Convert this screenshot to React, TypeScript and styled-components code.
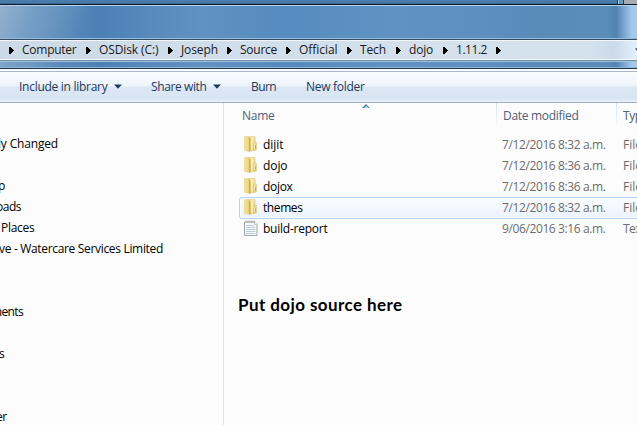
import React, { useLayoutEffect, useRef, useState } from "react";
import styled, { createGlobalStyle } from "styled-components";

const Global = createGlobalStyle`
  html, body { margin: 0; padding: 0; overflow: hidden; }
  * { box-sizing: border-box; }
`;

const Window = styled.div`
  width: 637px;
  height: 425px;
  overflow: hidden;
  display: flex;
  flex-direction: column;
  background: #fcfcfc;
  font-family: "Open Sans", "Noto Sans", sans-serif;
  font-size: 12px;
  line-height: 21px;
  color: #000;
`;

const Glass = styled.header`
  flex: none;
  height: 69px;
  display: flex;
  flex-direction: column;
  background:
    linear-gradient(90deg, transparent 606px, rgba(54, 105, 156, 0.3) 616px, rgba(145, 185, 228, 0.55) 624px, #a5c8ed 632px),
    linear-gradient(115deg, rgba(166, 188, 210, 0.75) 0, rgba(140, 174, 207, 0.5) 35px, transparent 85px),
    linear-gradient(90deg, #6794bf 0, #5688b9 70px, #4c80b5 100px, #588abd 150px, #6092c2 205px, #568bbf 285px, #6093c4 390px, #5d90c0 480px, #598bb9 540px, #5d8fbb 637px);
`;

const TopStrip = styled.div`
  flex: none;
  height: 6px;
  display: flex;
  justify-content: flex-end;
  background: linear-gradient(#487dae, #4679a6 3px, #335b7f 4px);
  border-bottom: 1px solid #b5d2e7;
  box-shadow: inset 0 -1px #101c2c;
`;

const StripEdge = styled.div`
  width: 20px;
  height: 4px;
  background: linear-gradient(90deg, #243d54 0 1px, #a9cfe8 1px 2px, #6697bb 2px 6px, #2c3f50 6px 7px, #a9a9b4 7px);
`;

const AddressBar = styled.nav`
  flex: none;
  height: 24px;
  margin-top: 32px;
  display: flex;
  align-items: center;
  padding-left: 9px;
  border-top: 1px solid #96bddd;
  border-bottom: 1px solid #a2c1da;
  box-shadow: inset 0 1px #344d64, inset 0 2px #f1f6fa, inset 0 -1px #6e8da8, inset 0 -2px #f3f7fb;
  background: linear-gradient(90deg, #ccdae7 0, #d0deeb 210px, #d4e1ec 400px, #d4e2ee 590px, #cbdae8 614px, #e2edfa 635px);
`;

const Crumb = styled.div<{ $w: number }>`
  flex: none;
  width: ${(p) => p.$w}px;
  height: 21px;
  margin-bottom: 1px;
  display: flex;
  align-items: center;
  gap: 8px;
  color: #1a1a1a;
  svg { flex: none; margin-top: 1px; }
`;

const AddressDrop = styled.div`
  margin-left: auto;
  width: 2px;
  height: 4px;
  overflow: hidden;
  display: flex;
`;

const LowerEdge = styled.div`
  flex: none;
  height: 2px;
  margin-top: 5px;
  background: linear-gradient(#8fb5d8 0 1px, #22384f 1px 2px);
`;

const CommandBar = styled.div`
  flex: none;
  height: 34px;
  padding: 5px 0 0 19px;
  display: flex;
  color: #1e395b;
  border-bottom: 1px solid #a0afc3;
  background: linear-gradient(#f9fcff 0 2px, #a9b6cd 2px 3px, #fbfdff 3px, #ecf4fc 17px, #dce7f5 18px, #dae5f3 30px, #e6eff9 32px, #e6eff9 33px);
`;

const Command = styled.div<{ $w: number }>`
  flex: none;
  width: ${(p) => p.$w}px;
  height: 24px;
  display: flex;
  align-items: center;
  gap: 6px;
  svg { flex: none; margin-top: 1px; }
`;

const Body = styled.div`
  flex: 1;
  display: flex;
  min-height: 0;
`;

const Sidebar = styled.aside`
  flex: none;
  width: 224px;
  padding-top: 30px;
  border-right: 1px solid #d6e5f5;
  overflow: hidden;
`;

const SideItem = styled.div<{ $x: number }>`
  height: 21px;
  display: flex;
  margin-left: ${(p) => p.$x}px;
`;

const Main = styled.main`
  flex: 1;
  min-width: 0;
  overflow: hidden;
`;

const Columns = styled.div`
  height: 31px;
  display: grid;
  grid-template-columns: 273px 120px 120px;
  color: #4c607a;
`;

const Column = styled.div<{ $pad: number }>`
  position: relative;
  height: 24px;
  display: flex;
  align-items: center;
  padding: 1px 0 0 ${(p) => p.$pad}px;
  border-right: 1px solid;
  border-image: linear-gradient(#cfe2f7, #e4eef9, #fcfcfc) 1;
`;

const SortMark = styled.svg`
  position: absolute;
  left: 138px;
  top: 1px;
`;

const FileRow = styled.div<{ $hot?: boolean }>`
  height: ${(p) => (p.$hot ? 22 : 21)}px;
  margin: 0 -4px ${(p) => (p.$hot ? -1 : 0)}px 15px;
  display: grid;
  grid-template-columns: 24px 239px 121px 60px;
  border-radius: 3px;
  box-shadow: ${(p) => (p.$hot ? "inset 0 0 0 1px #b3d3f9, inset 0 0 0 2px #fbfdff" : "none")};
  background: ${(p) => (p.$hot ? "linear-gradient(#fafcff, #ebf3fd)" : "none")};
`;

const IconCell = styled.div`
  padding: 2px 0 0 5px;
  svg { display: block; }
`;

const Meta = styled.div`
  color: #6d6d6d;
`;

const Caption = styled.div`
  margin: 54px 0 0 14px;
  height: 24px;
  font-family: Lato, "Open Sans", sans-serif;
  font-size: 17px;
  font-weight: 700;
  line-height: 24px;
`;

const Label = styled.span`
  display: inline-block;
  white-space: pre;
`;

/* Text tracked so that it occupies the given number of pixels. */
function Fit({ w, children }: { w: number; children: string }) {
  const ref = useRef<HTMLSpanElement>(null);
  const [spacing, setSpacing] = useState(0);
  useLayoutEffect(() => {
    const el = ref.current;
    if (!el) return;
    const natural = el.getBoundingClientRect().width - spacing * children.length;
    setSpacing((w - natural) / children.length);
  }, [w, children]);
  return <Label ref={ref} style={{ letterSpacing: spacing }}>{children}</Label>;
}

const Arrow = () => (
  <svg width="5" height="7" shapeRendering="crispEdges"><path d="M0 0h1l3.5 3.5L1 7H0z" fill="#000" /></svg>
);

const Down = ({ fill = "#1e395b" }: { fill?: string }) => (
  <svg width="8" height="5"><path d="M0 .4h8L4 4.8z" fill={fill} /></svg>
);

const Folder = () => (
  <svg width="13" height="16" viewBox="0 0 13 16">
    <defs>
      <linearGradient id="flap" x1="0" x2="1"><stop stopColor="#f3e5a0" /><stop offset=".6" stopColor="#ecd984" /><stop offset="1" stopColor="#dcc063" /></linearGradient>
      <linearGradient id="back" x1="0" y1="0" x2="0" y2="1"><stop stopColor="#f0e4a6" /><stop offset="1" stopColor="#e2c767" /></linearGradient>
    </defs>
    <path d="M4.5.6 10.3.3q.9 0 .9.9v4.3l1.3.8v7.2q0 .8-.8.8L5 15z" fill="url(#back)" stroke="#dcc77b" strokeWidth=".5" />
    <path d="M7.2 1.2h1.4v12.9H7.2z" fill="#faf3c6" />
    <path d="M.3 1.3q0-.8.8-.8L4.4.7q1.9.5 1.9 2v12.8L1 14.6q-.7-.2-.7-.9z" fill="url(#flap)" stroke="#dcc77b" strokeWidth=".5" />
    <path d="M5 1.6q1.2.4 1.2 1.5v12.3L5 15.2z" fill="#cdb052" />
    <path d="M11.1 9.2h.9v3.4h-.9z" fill="#6fb0d0" />
    <path d="M10.4 8.5h.7v4.6h-.7z" fill="#f8f3d4" />
  </svg>
);

const TextFile = () => (
  <svg width="14" height="17" viewBox="0 0 14 17">
    <path d="M.5 2h10.2l2.3 2.3v11.2H.5z" fill="#f6f8f9" stroke="#a2a5a7" />
    <path d="M10.5 2v2.5H13" fill="#fff" stroke="#b8babb" strokeWidth=".8" />
    <path d="M2 5.5h8M2 7.5h9.5M2 9.5h9.5M2 11.5h9.5M2 13.5h9.5" stroke="#bccdd5" />
    <path d="M2 .5v3M4 .5v3M6 .5v3M8 .5v3M10 .5v3" stroke="#969a9c" strokeWidth=".8" strokeDasharray="2 1" />
  </svg>
);

const crumbs: [string, number, number][] = [
  ["Computer", 54.5, 77], ["OSDisk (C:)", 59.5, 82], ["Joseph", 37, 59], ["Source", 37, 59],
  ["Official", 38.5, 61], ["Tech", 26, 49], ["dojo", 24, 47], ["1.11.2", 31, 53],
];

const side: [string, number, number][] = [
  ["ly Changed", -2, 60], ["", 0, 0], ["p", -2, 7.5], ["oads", -4, 25], ["Places", 1, 33.5],
  ["ve - Watercare Services Limited", -1, 164], ["", 0, 0], ["", 0, 0], ["ments", -9, 32],
  ["", 0, 0], ["s", -1, 5.5], ["", 0, 0], ["", 0, 0], ["er", -4, 10.5],
];

const files: [string, number, string, string][] = [
  ["dijit", 20.5, "7/12/2016 8:32 a.m.", "File folder"],
  ["dojo", 24.5, "7/12/2016 8:36 a.m.", "File folder"],
  ["dojox", 29.5, "7/12/2016 8:36 a.m.", "File folder"],
  ["themes", 39.5, "7/12/2016 8:32 a.m.", "File folder"],
  ["build-report", 64.5, "9/06/2016 3:16 a.m.", "Text Document"],
];

export default function App() {
  return (
    <Window>
      <Global />
      <Glass>
        <TopStrip><StripEdge /></TopStrip>
        <AddressBar>
          {crumbs.map(([name, w, pitch]) => (
            <Crumb key={name} $w={pitch}><Arrow /><Fit w={w}>{name}</Fit></Crumb>
          ))}
          <Crumb $w={5}><Arrow /></Crumb>
          <AddressDrop><Down fill="#00105c" /></AddressDrop>
        </AddressBar>
        <LowerEdge />
      </Glass>
      <CommandBar>
        <Command $w={132}><Fit w={88.5}>Include in library</Fit><Down /></Command>
        <Command $w={100}><Fit w={55.5}>Share with</Fit><Down /></Command>
        <Command $w={55}><Fit w={25}>Burn</Fit></Command>
        <Command $w={70}><Fit w={58.5}>New folder</Fit></Command>
      </CommandBar>
      <Body>
        <Sidebar>
          {side.map(([text, x, w], i) => (
            <SideItem key={i} $x={x}>{text && <Fit w={w}>{text}</Fit>}</SideItem>
          ))}
        </Sidebar>
        <Main>
          <Columns>
            <Column $pad={18}>
              <Fit w={32.5}>Name</Fit>
              <SortMark width="8" height="4"><path d="M0 4 4 0l4 4z" fill="#4f7992" /><path d="M2 4l2.2-2.2L7 4z" fill="#a8d6ee" /></SortMark>
            </Column>
            <Column $pad={6}><Fit w={75.5}>Date modified</Fit></Column>
            <Column $pad={6}><Fit w={25}>Type</Fit></Column>
          </Columns>
          {files.map(([name, w, date, type]) => (
            <FileRow key={name} $hot={name === "themes"}>
              <IconCell>{name === "build-report" ? <TextFile /> : <Folder />}</IconCell>
              <div><Fit w={w}>{name}</Fit></div>
              <Meta><Fit w={103.5}>{date}</Fit></Meta>
              <Meta><Fit w={type === "File folder" ? 55 : 78}>{type}</Fit></Meta>
            </FileRow>
          ))}
          <Caption><Fit w={164.5}>Put dojo source here</Fit></Caption>
        </Main>
      </Body>
    </Window>
  );
}
